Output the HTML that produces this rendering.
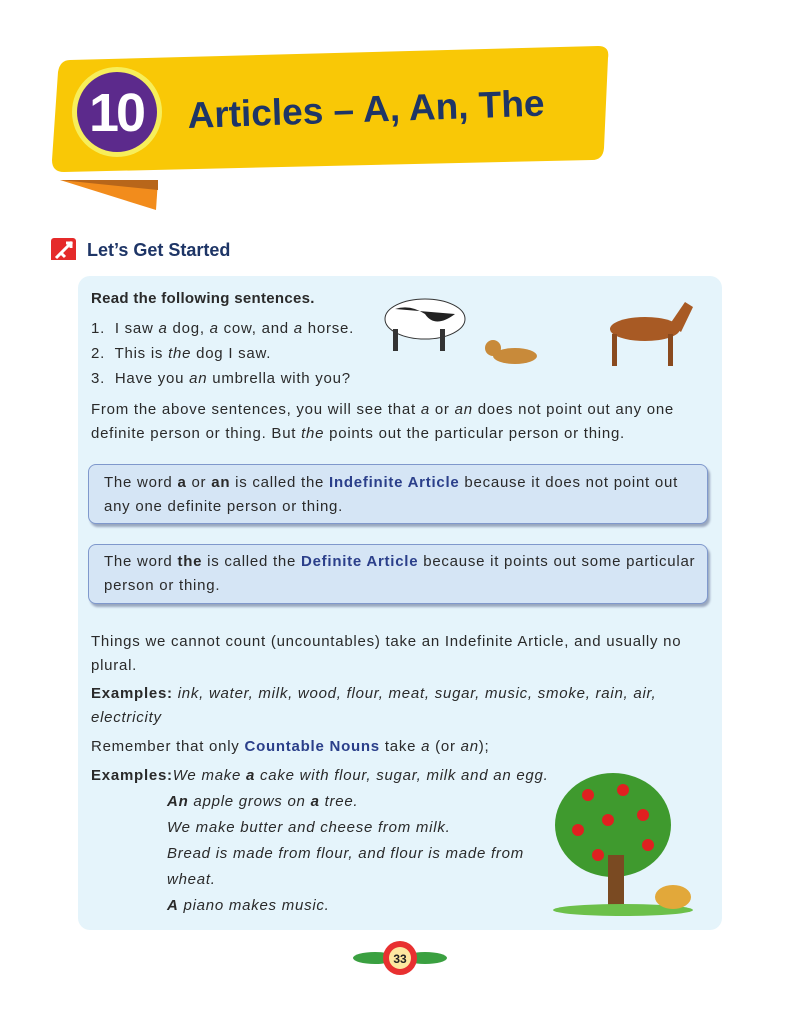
<!DOCTYPE html>
<html><head><meta charset="utf-8"><style>
body{margin:0;width:800px;height:1024px;background:#fff;position:relative;overflow:hidden;font-family:"Liberation Sans",sans-serif;color:#2a2a2a}
.abs{position:absolute}
.panel{left:78px;top:276px;width:644px;height:654px;background:#e5f4fb;border-radius:12px}
.t{position:absolute;font-size:15px;letter-spacing:0.75px;white-space:nowrap;line-height:18px}
.box{position:absolute;left:88px;width:618px;height:58px;background:#d5e5f5;border:1.5px solid #7f98cc;border-radius:8px;box-shadow:2px 3px 2px #9aa8bf}
.blue{color:#2b3f8a;font-weight:bold}
i{font-style:italic}
</style></head><body>
<svg class="abs" style="left:0;top:0" width="800" height="260">
<polygon points="60,180 158,180 156,210" fill="#f28c1c"/>
<polygon points="60,180 158,180 158,190" fill="#b8661a"/>
<path d="M70,60 L598,46 Q610,46 608,58 L604,148 Q603,160 592,160 L64,172 Q52,172 52,160 L58,72 Q60,60 70,60Z" fill="#f9c806"/>
<circle cx="117" cy="112" r="45" fill="#f7ee5a"/>
<circle cx="117" cy="112" r="40" fill="#5c2a8c"/>
<text x="116" y="131" text-anchor="middle" font-family="Liberation Sans" font-weight="bold" font-size="54" fill="#fff" letter-spacing="-3">10</text>
<text x="188" y="128" font-family="Liberation Sans" font-weight="bold" font-size="37" fill="#1e3566" transform="rotate(-2 188 128)">Articles – A, An, The</text>
<rect x="51" y="238" width="25" height="25" rx="3" fill="#e52a2a"/>
<path d="M56,258 L72,242 M60,252 l5,5 M66,243 l5,0 0,5" stroke="#fff" stroke-width="3" fill="none"/>
<text x="87" y="256" font-family="Liberation Sans" font-weight="bold" font-size="18" fill="#1e3566">Let’s Get Started</text>
<line x1="86" y1="261" x2="234" y2="261" stroke="#1e3566" stroke-width="1.5"/>
</svg>
<div class="abs panel"></div>
<div class="t" style="left:91px;top:290px;font-weight:bold;letter-spacing:0.3px">Read the following sentences.</div>
<div class="t" style="left:91px;top:320px">1.&nbsp; I saw <i>a</i> dog, <i>a</i> cow, and <i>a</i> horse.</div>
<div class="t" style="left:91px;top:345px">2.&nbsp; This is <i>the</i> dog I saw.</div>
<div class="t" style="left:91px;top:370px">3.&nbsp; Have you <i>an</i> umbrella with you?</div>
<div class="t" style="left:91px;top:401px">From the above sentences, you will see that <i>a</i> or <i>an</i> does not point out any one</div>
<div class="t" style="left:91px;top:425px">definite person or thing. But <i>the</i> points out the particular person or thing.</div>
<svg class="abs" style="left:375px;top:284px" width="330" height="90">
<ellipse cx="50" cy="35" rx="40" ry="20" fill="#fff" stroke="#333"/>
<path d="M20,25 q15,-5 30,5 q10,15 30,0" fill="#222"/>
<rect x="18" y="45" width="5" height="22" fill="#333"/><rect x="65" y="45" width="5" height="22" fill="#333"/>
<ellipse cx="140" cy="72" rx="22" ry="8" fill="#c88a3a"/>
<circle cx="118" cy="64" r="8" fill="#c88a3a"/>
<ellipse cx="270" cy="45" rx="35" ry="12" fill="#a85a24"/>
<path d="M295,40 l15,-22 l8,5 l-12,25z" fill="#a85a24"/>
<rect x="237" y="50" width="5" height="32" fill="#8a4a1e"/><rect x="293" y="50" width="5" height="32" fill="#8a4a1e"/>
</svg>
<div class="box" style="top:464px"></div>
<div class="t" style="left:104px;top:474px">The word <b>a</b> or <b>an</b> is called the <span class="blue">Indefinite Article</span> because it does not point out</div>
<div class="t" style="left:104px;top:498px">any one definite person or thing.</div>
<div class="box" style="top:544px"></div>
<div class="t" style="left:104px;top:553px">The word <b>the</b> is called the <span class="blue">Definite Article</span> because it points out some particular</div>
<div class="t" style="left:104px;top:577px">person or thing.</div>
<div class="t" style="left:91px;top:633px">Things we cannot count (uncountables) take an Indefinite Article, and usually no</div>
<div class="t" style="left:91px;top:657px">plural.</div>
<div class="t" style="left:91px;top:685px"><b>Examples:</b> <i>ink, water, milk, wood, flour, meat, sugar, music, smoke, rain, air,</i></div>
<div class="t" style="left:91px;top:709px"><i>electricity</i></div>
<div class="t" style="left:91px;top:738px">Remember that only <span class="blue">Countable Nouns</span> take <i>a</i> (or <i>an</i>);</div>
<div class="t" style="left:91px;top:767px"><b>Examples:</b><i>We make <b>a</b> cake with flour, sugar, milk and an egg.</i></div>
<div class="t" style="left:167px;top:793px"><i><b>An</b> apple grows on <b>a</b> tree.</i></div>
<div class="t" style="left:167px;top:819px"><i>We make butter and cheese from milk.</i></div>
<div class="t" style="left:167px;top:845px"><i>Bread is made from flour, and flour is made from</i></div>
<div class="t" style="left:167px;top:871px"><i>wheat.</i></div>
<div class="t" style="left:167px;top:897px"><i><b>A</b> piano makes music.</i></div>
<svg class="abs" style="left:548px;top:765px" width="150" height="155">
<ellipse cx="65" cy="60" rx="58" ry="52" fill="#3f9a2e"/>
<rect x="60" y="90" width="16" height="55" fill="#7a4a22"/>
<g fill="#e02020"><circle cx="40" cy="30" r="6"/><circle cx="75" cy="25" r="6"/><circle cx="95" cy="50" r="6"/><circle cx="30" cy="65" r="6"/><circle cx="60" cy="55" r="6"/><circle cx="100" cy="80" r="6"/><circle cx="50" cy="90" r="6"/></g>
<ellipse cx="75" cy="145" rx="70" ry="6" fill="#6cc04a"/>
<ellipse cx="125" cy="132" rx="18" ry="12" fill="#e2a83a"/>
</svg>
<svg class="abs" style="left:350px;top:938px" width="100" height="40">
<ellipse cx="25" cy="20" rx="22" ry="6" fill="#3aa040"/><ellipse cx="75" cy="20" rx="22" ry="6" fill="#3aa040"/>
<circle cx="50" cy="20" r="17" fill="#e83030"/><circle cx="50" cy="20" r="11" fill="#fde8a0"/>
<text x="50" y="25" text-anchor="middle" font-family="Liberation Sans" font-weight="bold" font-size="12" fill="#222">33</text>
</svg>
</body></html>
